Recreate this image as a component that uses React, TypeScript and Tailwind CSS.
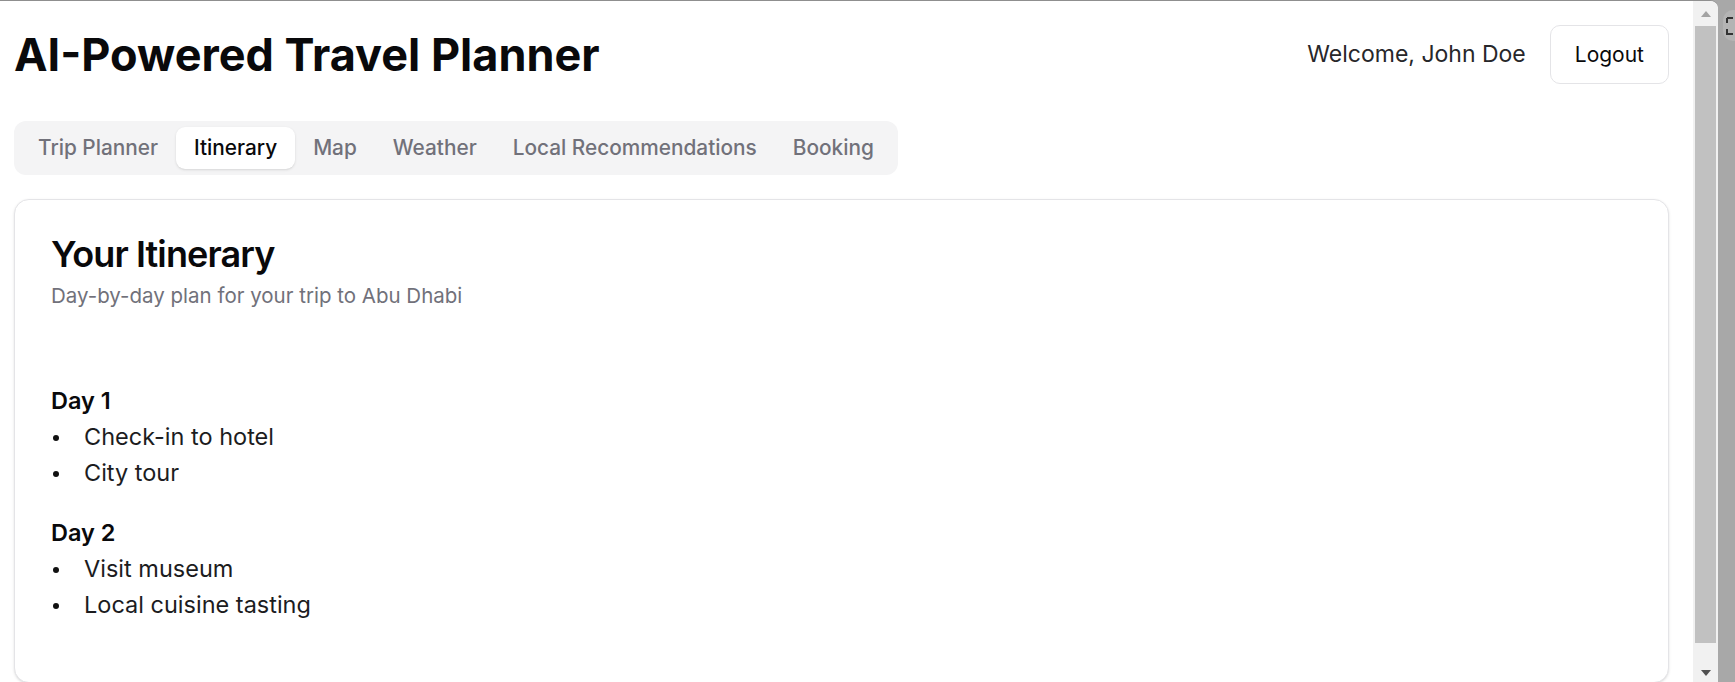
import React, { useState } from 'react';

const tabs = ['Trip Planner', 'Itinerary', 'Map', 'Weather', 'Local Recommendations', 'Booking'];

const itinerary = [
  { day: 'Day 1', activities: ['Check-in to hotel', 'City tour'] },
  { day: 'Day 2', activities: ['Visit museum', 'Local cuisine tasting'] },
];

// Fake browser scrollbar on the right edge of the window
const Scrollbar = () => (
  <div className="flex w-[25px] shrink-0 flex-col items-center bg-[#f1f1f1]">
    <div className="flex h-[25px] w-full items-center justify-center">
      <svg width="10" height="6" viewBox="0 0 10 6">
        <path d="M5 0 L10 6 L0 6 Z" fill="#a3a3a3" />
      </svg>
    </div>
    <div className="h-[617px] w-[21px] bg-[#c1c1c1]" />
    <div className="flex flex-1 w-full items-end justify-center pb-[6px]">
      <svg width="10" height="6" viewBox="0 0 10 6">
        <path d="M0 0 L10 0 L5 6 Z" fill="#505050" />
      </svg>
    </div>
  </div>
);

const App = () => {
  const [activeTab, setActiveTab] = useState('Itinerary');

  return (
    <div
      className="flex h-[682px] w-full overflow-hidden bg-[#a8a8a8]"
      style={{ fontFamily: 'Inter, "Noto Sans", sans-serif' }}
    >
      <div className="flex flex-1 overflow-hidden rounded-tr-[8px] border-t border-[#8f8f8f] bg-white">
        <main className="flex-1 pl-[14px] pr-[24px] pt-[24px]">
          {/* Header */}
          <div className="flex items-center justify-between">
            <h1 className="text-[45px] font-bold leading-none text-[#09090b]">
              AI-Powered Travel Planner
            </h1>
            <div className="flex items-center gap-[24px]">
              <span className="text-[23px] text-[#27272a]">Welcome, John Doe</span>
              <button className="h-[59px] rounded-[10px] border border-[#e4e4e7] bg-white px-[24px] text-[21px] text-[#09090b]">
                Logout
              </button>
            </div>
          </div>

          {/* Tabs */}
          <div className="mt-[37px] inline-flex h-[54px] items-center rounded-[12px] bg-[#f4f4f5] p-[6px]">
            {tabs.map((tab) => (
              <button
                key={tab}
                onClick={() => setActiveTab(tab)}
                className={
                  activeTab === tab
                    ? 'h-[42px] rounded-[9px] bg-white px-[18px] text-[20.8px] font-medium text-[#09090b] shadow-sm'
                    : 'h-[42px] rounded-[9px] px-[18px] text-[20.8px] font-medium text-[#71717a]'
                }
              >
                {tab}
              </button>
            ))}
          </div>

          {/* Itinerary card */}
          <div className="mt-[24px] rounded-[15px] border border-[#e4e4e7] bg-white px-[36px] pb-[59px] pt-[36px] shadow-sm">
            <h2 className="text-[36px] font-semibold leading-none tracking-tight text-[#09090b]">
              Your Itinerary
            </h2>
            <p className="mt-[9px] text-[20.5px] leading-[30px] text-[#71717a]">
              Day-by-day plan for your trip to Abu Dhabi
            </p>

            <div className="mt-[72px] flex flex-col gap-[24px]">
              {itinerary.map((d) => (
                <div key={d.day}>
                  <h3 className="text-[23.5px] font-semibold leading-[36px] text-[#09090b]">{d.day}</h3>
                  <ul>
                    {d.activities.map((a) => (
                      <li key={a} className="flex items-center gap-[25px] text-[23.5px] leading-[36px] text-[#1c1c1e]">
                        <span className="ml-[2px] mt-[2px] h-[6px] w-[6px] rounded-full bg-[#111]" />
                        {a}
                      </li>
                    ))}
                  </ul>
                </div>
              ))}
            </div>
          </div>
        </main>
        <Scrollbar />
      </div>

      {/* edge of the window behind */}
      <div className="w-[17px] shrink-0 pt-[10px]">
        <div className="ml-[5px] flex h-[31px] items-center rounded-l-[10px] bg-[#b4b4b4] pl-[2px]">
          <svg width="10" height="20" viewBox="0 0 10 20">
            <path d="M2 2 L2 7 M2 2 L8 2 M2 13 L2 18 L8 18" stroke="#333" strokeWidth="2" fill="none" />
          </svg>
        </div>
      </div>
    </div>
  );
};

export default App;
